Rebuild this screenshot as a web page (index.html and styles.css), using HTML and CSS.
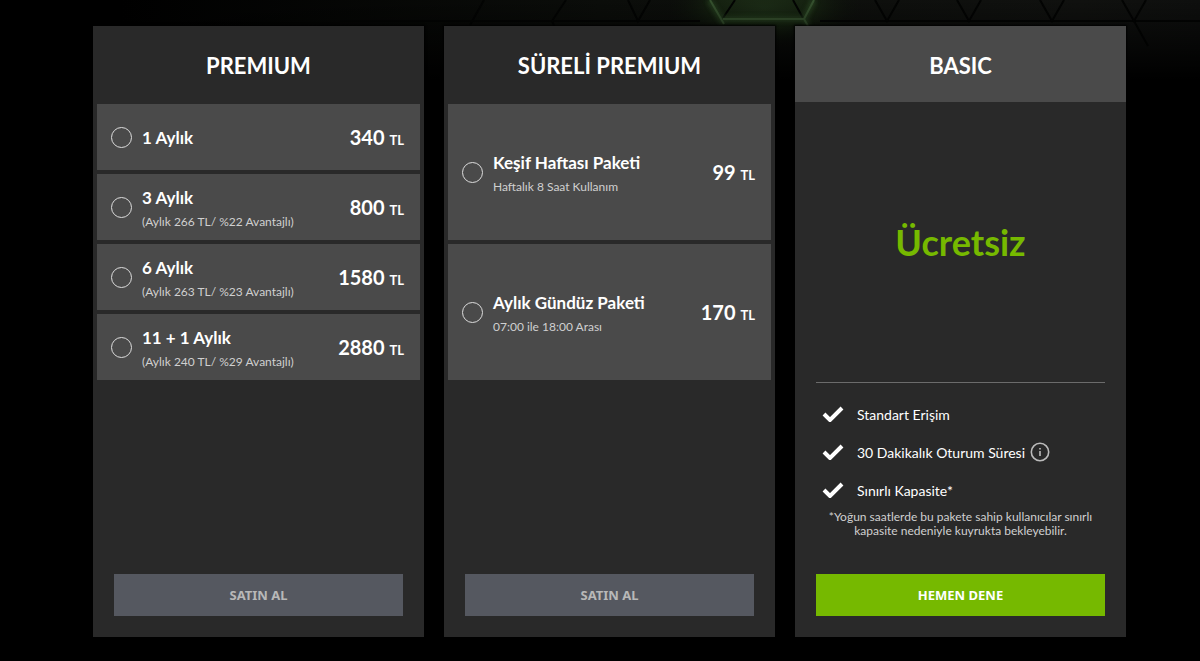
FILE: index.html
```html
<!DOCTYPE html>
<html lang="tr">

<head>
    <meta charset="UTF-8">
    <meta name="viewport" content="width=device-width, initial-scale=1.0">
    <title>Üyelik Paketleri</title>
    <link rel="stylesheet" href="styles.css">
</head>

<body>

    <!-- Hexagon background -->
    <svg class="hex-bg" width="1200" height="80" viewBox="0 0 1200 80" aria-hidden="true">
        <defs>
            <linearGradient id="panel" x1="0" y1="0" x2="1" y2="0">
                <stop offset="0.1" stop-color="#0b0d0a" stop-opacity="0" />
                <stop offset="0.5" stop-color="#0b0d0a" />
                <stop offset="0.9" stop-color="#10110f" />
                <stop offset="1" stop-color="#0e0f0e" />
            </linearGradient>
            <linearGradient id="fade" x1="0" y1="0" x2="0" y2="1">
                <stop offset="0" stop-color="#000" stop-opacity="0" />
                <stop offset="1" stop-color="#000" />
            </linearGradient>
            <radialGradient id="glow">
                <stop offset="0" stop-color="#1e3018" stop-opacity="0.9" />
                <stop offset="0.5" stop-color="#182712" stop-opacity="0.8" />
                <stop offset="1" stop-color="#0c1409" stop-opacity="0" />
            </radialGradient>
            <filter id="soft" x="-20%" y="-50%" width="140%" height="200%">
                <feGaussianBlur stdDeviation="2" />
            </filter>
        </defs>
        <rect width="1200" height="80" fill="url(#panel)" />
        <ellipse cx="764" cy="8" rx="96" ry="40" fill="url(#glow)" />
        <g fill="none" stroke="#030403" stroke-width="2">
            <path d="M340 21H700M820 21H1200" />
            <path d="M484 0L470 25M566 0L552 21L562 44M628 0L638 21L650 0" />
            <path d="M735 0L723 18M793 0L803 18" />
            <path d="M875 0L887 21L899 0M957 0L969 21L981 0M1040 0L1052 21L1064 0M1122 0L1134 21L1146 0" />
            <path d="M1134 21L1148 46" />
        </g>
        <path d="M709 0L724 24M723 19H804M814 0L804 19L808 26" fill="none" stroke="#33552a" stroke-width="6" opacity="0.5" filter="url(#soft)" />
        <path d="M710 0L724 24M723 19H804M814 0L804 19L808 26" fill="none" stroke="#3c5a34" stroke-width="2" opacity="0.8" />
        <rect width="1200" height="80" fill="url(#fade)" />
    </svg>

    <main class="plans">
        <!-- Premium -->
        <form class="plan">
            <h2 class="plan-title">PREMIUM</h2>
            <div class="options">
                <label class="option">
                    <input type="radio" name="premium" value="1">
                    <span class="option-text">
                        <strong>1 Aylık</strong>
                    </span>
                    <span class="price">340 <small>TL</small></span>
                </label>
                <label class="option">
                    <input type="radio" name="premium" value="3">
                    <span class="option-text">
                        <strong>3 Aylık</strong>
                        <span class="detail">(Aylık 266 TL/ %22 Avantajlı)</span>
                    </span>
                    <span class="price">800 <small>TL</small></span>
                </label>
                <label class="option">
                    <input type="radio" name="premium" value="6">
                    <span class="option-text">
                        <strong>6 Aylık</strong>
                        <span class="detail">(Aylık 263 TL/ %23 Avantajlı)</span>
                    </span>
                    <span class="price">1580 <small>TL</small></span>
                </label>
                <label class="option">
                    <input type="radio" name="premium" value="12">
                    <span class="option-text">
                        <strong>11 + 1 Aylık</strong>
                        <span class="detail">(Aylık 240 TL/ %29 Avantajlı)</span>
                    </span>
                    <span class="price">2880 <small>TL</small></span>
                </label>
            </div>
            <button class="btn" type="button">SATIN AL</button>
        </form>

        <!-- Timed premium -->
        <form class="plan">
            <h2 class="plan-title">SÜRELİ PREMIUM</h2>
            <div class="options options-tall">
                <label class="option">
                    <input type="radio" name="timed" value="week">
                    <span class="option-text">
                        <strong>Keşif Haftası Paketi</strong>
                        <span class="detail">Haftalık 8 Saat Kullanım</span>
                    </span>
                    <span class="price">99 <small>TL</small></span>
                </label>
                <label class="option">
                    <input type="radio" name="timed" value="day">
                    <span class="option-text">
                        <strong>Aylık Gündüz Paketi</strong>
                        <span class="detail">07:00 ile 18:00 Arası</span>
                    </span>
                    <span class="price">170 <small>TL</small></span>
                </label>
            </div>
            <button class="btn" type="button">SATIN AL</button>
        </form>

        <!-- Basic -->
        <section class="plan">
            <h2 class="plan-title plan-title-light">BASIC</h2>
            <p class="free">Ücretsiz</p>
            <div class="features">
                <ul>
                    <li>
                        <svg class="check" width="22" height="16" viewBox="0 0 22 16" aria-hidden="true"><path d="M2 8L8 14L20 2" /></svg>
                        Standart Erişim
                    </li>
                    <li>
                        <svg class="check" width="22" height="16" viewBox="0 0 22 16" aria-hidden="true"><path d="M2 8L8 14L20 2" /></svg>
                        30 Dakikalık Oturum Süresi
                        <button class="info" type="button" aria-label="Bilgi">
                            <svg width="20" height="20" viewBox="0 0 20 20" aria-hidden="true">
                                <circle cx="10" cy="10" r="8.7" />
                                <path d="M10 6V7.5M10 9V14" />
                            </svg>
                        </button>
                    </li>
                    <li>
                        <svg class="check" width="22" height="16" viewBox="0 0 22 16" aria-hidden="true"><path d="M2 8L8 14L20 2" /></svg>
                        Sınırlı Kapasite*
                    </li>
                </ul>
                <p class="note">*Yoğun saatlerde bu pakete sahip kullanıcılar sınırlı kapasite nedeniyle kuyrukta bekleyebilir.</p>
            </div>
            <button class="btn btn-green" type="button">HEMEN DENE</button>
        </section>
    </main>

</body>

</html>
```
FILE: styles.css
```css
* {
    box-sizing: border-box;
}

body {
    margin: 0;
    min-height: 100vh;
    background-color: #000;
    color: #fff;
    font-family: Lato, "Open Sans", sans-serif;
}

/* Background pattern behind the cards */
.hex-bg {
    position: absolute;
    top: 0;
    left: 0;
    z-index: -1;
}

/* Plan cards */
.plans {
    display: grid;
    grid-template-columns: repeat(3, 1fr);
    gap: 20px;
    min-height: 100vh;
    padding: 26px 74px 24px 93px;
}

.plan {
    display: flex;
    flex-direction: column;
    background-color: #292929;
    box-shadow: 0 0 2px 1px #000;
}

.plan-title {
    margin: 0;
    padding: 26px 0 22px;
    font-size: 22px;
    line-height: 28px;
    text-align: center;
}

.plan-title-light {
    background-color: #4a4a4a;
}

/* Radio options */
.options {
    display: grid;
    grid-auto-rows: 66px;
    gap: 4px;
    padding: 2px 4px 0;
}

.options-tall {
    grid-auto-rows: 136px;
}

.option {
    display: flex;
    align-items: center;
    gap: 10px;
    padding: 0 16px 0 14px;
    background-color: #4a4a4a;
    cursor: pointer;
}

.option input {
    appearance: none;
    width: 21px;
    height: 21px;
    margin: 0;
    border: 1px solid #ddd;
    border-radius: 50%;
}

.option input:checked {
    background-color: #76b900;
}

.option-text {
    display: flex;
    flex-direction: column;
    flex: 1;
    gap: 4px;
    padding-top: 2px;
}

.option strong {
    font-size: 17px;
    line-height: 24px;
}

.detail {
    color: #d0d0d0;
    font-size: 12px;
    line-height: 16px;
}

.price {
    font-size: 20px;
    font-weight: bold;
}

.price small {
    font-size: 13px;
}

/* Buttons */
.btn {
    height: 42px;
    margin: auto 21px 21px;
    border: none;
    background-color: #555860;
    color: #b8b8b8;
    font-family: "Noto Sans", "Open Sans", sans-serif;
    font-size: 13px;
    font-weight: bold;
    cursor: pointer;
}

.btn-green {
    background-color: #76b900;
    color: #fff;
}

/* Basic plan */
.free {
    display: flex;
    align-items: center;
    justify-content: center;
    height: 280px;
    margin: 0;
    color: #76b900;
    font-size: 36px;
    font-weight: bold;
}

.features {
    margin: 0 21px;
    padding-top: 12px;
    border-top: 1px solid #6b6b6b;
}

.features ul {
    margin: 0;
    padding: 0 6px;
    list-style: none;
}

.features li {
    display: flex;
    align-items: center;
    height: 38px;
    font-size: 14px;
}

.check {
    margin-right: 13px;
    fill: none;
    stroke: #fff;
    stroke-width: 4;
}

.info {
    display: flex;
    margin-left: 5px;
    padding: 0;
    border: none;
    background: none;
    cursor: pointer;
}

.info svg {
    fill: none;
    stroke: #bbb;
    stroke-width: 1.6;
}

.note {
    margin: 0;
    padding-top: 1px;
    color: #d0d0d0;
    font-size: 12px;
    line-height: 14px;
    text-align: center;
}
```
